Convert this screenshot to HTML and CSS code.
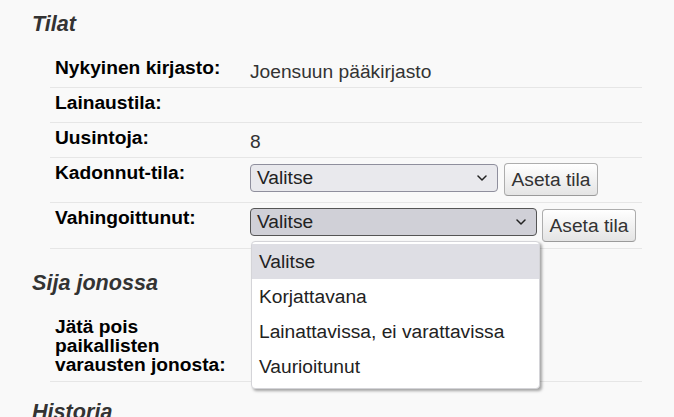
FILE: index.html
```html
<!DOCTYPE html>
<html lang="fi">
<head>
<meta charset="utf-8">
<title>Tilat</title>
<link rel="stylesheet" href="styles.css">
</head>
<body>
<div class="page">
  <h2 class="section-title">Tilat</h2>
  <div class="props">
    <div class="row">
      <div class="label">Nykyinen kirjasto:</div>
      <div class="value">Joensuun pääkirjasto</div>
    </div>
    <div class="row">
      <div class="label">Lainaustila:</div>
      <div class="value"></div>
    </div>
    <div class="row">
      <div class="label">Uusintoja:</div>
      <div class="value">8</div>
    </div>
    <div class="row">
      <div class="label">Kadonnut-tila:</div>
      <div class="value controls">
        <div class="select select-lost">
          <span class="select-text">Valitse</span>
          <svg class="chev" width="10" height="6" viewBox="0 0 10 6"><path d="M1 1 L5 5 L9 1" fill="none" stroke="#222" stroke-width="1.5" stroke-linecap="round" stroke-linejoin="round"/></svg>
        </div>
        <div class="btn">Aseta tila</div>
      </div>
    </div>
    <div class="row">
      <div class="label">Vahingoittunut:</div>
      <div class="value controls">
        <div class="select-wrap">
          <div class="select select-damaged open">
            <span class="select-text">Valitse</span>
            <svg class="chev" width="10" height="6" viewBox="0 0 10 6"><path d="M1 1 L5 5 L9 1" fill="none" stroke="#222" stroke-width="1.5" stroke-linecap="round" stroke-linejoin="round"/></svg>
          </div>
          <div class="dropdown">
            <div class="option active">Valitse</div>
            <div class="option">Korjattavana</div>
            <div class="option">Lainattavissa, ei varattavissa</div>
            <div class="option">Vaurioitunut</div>
          </div>
        </div>
        <div class="btn btn-second">Aseta tila</div>
      </div>
    </div>
  </div>

  <h2 class="section-title">Sija jonossa</h2>
  <div class="props">
    <div class="row">
      <div class="label label-wrap">Jätä pois paikallisten varausten jonosta:</div>
      <div class="value"></div>
    </div>
  </div>

  <h2 class="section-title section-last">Historia</h2>
</div>
</body>
</html>
```

FILE: styles.css
```css
html, body {
  margin: 0;
  padding: 0;
  background: #f9f9f9;
}

body {
  font-family: "Liberation Sans", Arial, sans-serif;
  font-size: 19.2px;
  color: #333;
  overflow: hidden;
}

.page {
  padding: 11px 0 0 32px;
}

.section-title {
  margin: 0 0 17px 0;
  font-size: 21.6px;
  line-height: 25px;
  font-weight: bold;
  font-style: italic;
  color: #333;
}

.props + .section-title {
  margin-top: 21px;
}

.props + .section-last {
  margin-top: 17px;
}

.props {
  margin-left: 18px;
  width: 592px;
}

.row {
  display: grid;
  grid-template-columns: 200px 1fr;
  border-bottom: 1px solid #e6e6e6;
}

.label {
  padding: 5px 5px 5px 5px;
  font-weight: bold;
  color: #000;
  line-height: 19.2px;
}

.label-wrap {
  max-width: 180px;
  padding-bottom: 6px;
}

.value {
  padding: 9px 0 5px 0;
  line-height: 20px;
  min-height: 20px;
  color: #333;
}

.controls {
  display: flex;
  align-items: flex-start;
  gap: 6px;
  padding: 5px 0 6px 0;
}

.select-wrap {
  position: relative;
}

.select {
  box-sizing: border-box;
  height: 28px;
  margin-top: 1px;
  border: 1px solid #8f8f9d;
  border-radius: 4px;
  background: #e9e9ed;
  display: flex;
  align-items: center;
  justify-content: space-between;
  padding: 0 10px 0 6px;
  color: #222;
  line-height: 26px;
}

.select-lost {
  width: 248px;
  margin-top: 1px;
}

.select-damaged {
  width: 287px;
  margin-top: 0;
}

.select.open {
  background: #d0d0d7;
  border-color: #555;
}

.chev {
  display: block;
  flex: none;
}

.btn {
  box-sizing: border-box;
  width: 94px;
  height: 33px;
  border: 1px solid #adadad;
  border-bottom-color: #9a9a9a;
  border-radius: 4px;
  background: linear-gradient(#ffffff, #e4e4e4);
  color: #333;
  text-align: center;
  line-height: 31px;
}

.btn-second {
  margin-top: 1px;
  margin-left: -1px;
}

.dropdown {
  position: absolute;
  left: 1px;
  top: 33px;
  width: 289px;
  box-sizing: border-box;
  padding: 2px 0 4px 0;
  background: #fff;
  border: 1px solid #d4d4d8;
  border-radius: 4px;
  box-shadow: 2px 2px 3px rgba(0, 0, 0, 0.35);
  z-index: 10;
}

.option {
  height: 35px;
  line-height: 35px;
  padding-left: 7px;
  color: #222;
  white-space: nowrap;
}

.option.active {
  background: #dedee4;
}
```
